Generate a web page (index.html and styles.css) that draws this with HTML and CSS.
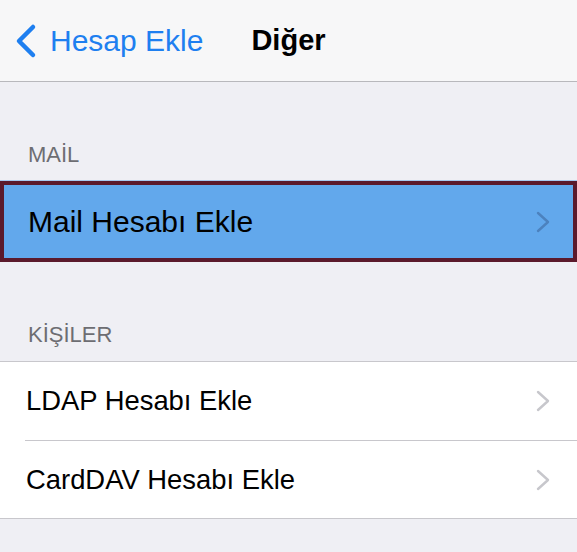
FILE: index.html
```html
<!DOCTYPE html>
<html lang="tr">
<head>
    <meta charset="UTF-8">
    <meta name="viewport" content="width=device-width, initial-scale=1.0">
    <title>Diğer</title>
    <link rel="stylesheet" href="styles.css">
</head>
<body>
    <div class="nav-bar">
        <a class="back-link" href="#">
            <svg class="back-icon" width="24" height="36" viewBox="0 0 24 36">
                <polyline points="19,4 5,18 19,32" fill="none" stroke="#1e7ff0" stroke-width="4.5" stroke-linecap="round" stroke-linejoin="round"/>
            </svg>
            <span>Hesap Ekle</span>
        </a>
        <div class="nav-title">Diğer</div>
        <div></div>
    </div>

    <!-- Mail -->
    <div class="section-header">MAİL</div>
    <div class="row row-selected">
        <span>Mail Hesabı Ekle</span>
        <svg class="chevron" width="14" height="22" viewBox="0 0 14 22">
            <polyline points="2,2 12,11 2,20" fill="none" stroke="#4c82be" stroke-width="2.4" stroke-linecap="round" stroke-linejoin="round"/>
        </svg>
    </div>

    <!-- Kişiler -->
    <div class="section-header">KİŞİLER</div>
    <div class="list-group">
        <div class="row">
            <span>LDAP Hesabı Ekle</span>
            <svg class="chevron" width="14" height="22" viewBox="0 0 14 22">
                <polyline points="2,2 12,11 2,20" fill="none" stroke="#c7c7cc" stroke-width="2.4" stroke-linecap="round" stroke-linejoin="round"/>
            </svg>
        </div>
        <div class="row">
            <span>CardDAV Hesabı Ekle</span>
            <svg class="chevron" width="14" height="22" viewBox="0 0 14 22">
                <polyline points="2,2 12,11 2,20" fill="none" stroke="#c7c7cc" stroke-width="2.4" stroke-linecap="round" stroke-linejoin="round"/>
            </svg>
        </div>
    </div>
</body>
</html>
```

FILE: styles.css
```css
body {
    margin: 0;
    background-color: #efeff4;
    font-family: "Liberation Sans", Arial, sans-serif;
    color: #000;
}
.nav-bar {
    height: 81px;
    background-color: #f7f7f8;
    border-bottom: 1px solid #b8b8bc;
    display: grid;
    grid-template-columns: 1fr auto 1fr;
    align-items: center;
}
.back-link {
    display: flex;
    align-items: center;
    padding-left: 14px;
    color: #1e7ff0;
    text-decoration: none;
    font-size: 30px;
}
.back-icon {
    margin-right: 12px;
}
.nav-title {
    font-size: 29px;
    font-weight: bold;
}
.section-header {
    padding: 60px 28px 13px;
    line-height: 26px;
    font-size: 22px;
    color: #6d6d72;
}
.list-group {
    background: white;
    border-top: 1px solid #c8c7cc;
    border-bottom: 1px solid #c8c7cc;
}
.row {
    height: 78px;
    display: flex;
    align-items: center;
    justify-content: space-between;
    padding: 0 27px 0 26px;
    font-size: 27.4px;
    background: white;
}
.list-group .row + .row {
    height: 77px;
    border-top: 1px solid #c8c7cc;
    margin-left: 25px;
    padding-left: 1px;
}
.row-selected {
    box-sizing: border-box;
    height: 81px;
    background-color: #62a8ec;
    border: 4px solid #5b1a2c;
    box-shadow: 0 -1px 0 #a8caf0;
    padding: 0 23px 0 24px;
    font-size: 30px;
}
```
